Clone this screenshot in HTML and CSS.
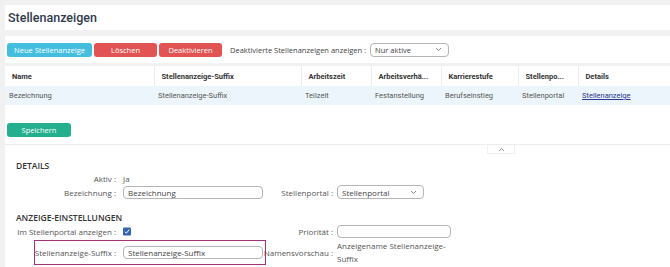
FILE: index.html
```html
<!DOCTYPE html>
<html lang="de">
<head>
    <meta charset="UTF-8">
    <title>Stellenanzeigen</title>
    <link rel="stylesheet" href="styles.css">
</head>
<body>
    <!-- Title -->
    <div class="title-panel">
        <h1>Stellenanzeigen</h1>
    </div>

    <!-- Toolbar -->
    <div class="toolbar">
        <button class="btn btn-info btn-new">Neue Stellenanzeige</button>
        <button class="btn btn-danger btn-delete">Löschen</button>
        <button class="btn btn-danger btn-deactivate">Deaktivieren</button>
        <span class="toolbar-label">Deaktivierte Stellenanzeigen anzeigen :</span>
        <div class="select select-filter">
            <span>Nur aktive</span>
            <svg width="7" height="5" viewBox="0 0 7 5"><path d="M1 1l2.5 2.5L6 1" fill="none" stroke="#777" stroke-width="0.9"/></svg>
        </div>
    </div>

    <div class="content">
        <!-- List -->
        <table class="list">
            <colgroup>
                <col style="width:149px">
                <col style="width:147px">
                <col style="width:70px">
                <col style="width:70px">
                <col style="width:77px">
                <col style="width:60px">
                <col>
            </colgroup>
            <thead>
                <tr>
                    <th>Name</th>
                    <th>Stellenanzeige-Suffix</th>
                    <th>Arbeitszeit</th>
                    <th>Arbeitsverhä...</th>
                    <th>Karrierestufe</th>
                    <th>Stellenpo...</th>
                    <th>Details</th>
                </tr>
            </thead>
            <tbody>
                <tr>
                    <td>Bezeichnung</td>
                    <td>Stellenanzeige-Suffix</td>
                    <td>Teilzeit</td>
                    <td>Festanstellung</td>
                    <td>Berufseinstieg</td>
                    <td>Stellenportal</td>
                    <td><a href="#">Stellenanzeige</a></td>
                </tr>
            </tbody>
        </table>

        <div class="save-bar">
            <button class="btn btn-success btn-save">Speichern</button>
        </div>

        <div class="divider">
            <div class="divider-tab">
                <svg width="7" height="5" viewBox="0 0 7 5"><path d="M1 4l2.5-2.5L6 4" fill="none" stroke="#888" stroke-width="0.9"/></svg>
            </div>
        </div>

        <!-- Detail form -->
        <div class="form">
            <h2 class="section-title">DETAILS</h2>
            <div class="form-row row-small">
                <div class="pair">
                    <label class="label">Aktiv :</label>
                    <div class="field"><span class="value">Ja</span></div>
                </div>
            </div>
            <div class="form-row">
                <div class="pair">
                    <label class="label">Bezeichnung :</label>
                    <div class="field"><div class="input">Bezeichnung</div></div>
                </div>
                <div class="pair pair-right">
                    <label class="label">Stellenportal :</label>
                    <div class="field">
                        <div class="select select-portal">
                            <span>Stellenportal</span>
                            <svg width="7" height="5" viewBox="0 0 7 5"><path d="M1 1l2.5 2.5L6 1" fill="none" stroke="#777" stroke-width="0.9"/></svg>
                        </div>
                    </div>
                </div>
            </div>

            <h2 class="section-title section-second">ANZEIGE-EINSTELLUNGEN</h2>
            <div class="form-row">
                <div class="pair">
                    <label class="label">Im Stellenportal anzeigen :</label>
                    <div class="field">
                        <svg class="checkbox" width="8" height="9" viewBox="0 0 8 9"><rect x="0" y="0.5" width="8" height="8" rx="1.2" fill="#3567b0"/><path d="M2 4.7l1.4 1.5L6.2 2.6" fill="none" stroke="#fff" stroke-width="1"/></svg>
                    </div>
                </div>
                <div class="pair pair-right">
                    <label class="label">Priorität :</label>
                    <div class="field"><div class="input input-prio"></div></div>
                </div>
            </div>
            <div class="form-row row-suffix">
                <div class="pair highlighted">
                    <label class="label">Stellenanzeige-Suffix :</label>
                    <div class="field"><div class="input">Stellenanzeige-Suffix</div></div>
                </div>
                <div class="pair pair-right">
                    <label class="label">Namensvorschau :</label>
                    <div class="field"><span class="value preview">Anzeigename Stellenanzeige-Suffix</span></div>
                </div>
            </div>
        </div>
    </div>
</body>
</html>
```

FILE: styles.css
```css
html {
    height: 100%;
    overflow: hidden;
}
body {
    margin: 0;
    padding: 5px 0 0 5px;
    box-sizing: border-box;
    height: 100%;
    display: flex;
    flex-direction: column;
    background-color: #f1f1f1;
    font-family: "Open Sans", Arial, sans-serif;
    font-size: 8px;
    color: #555;
    overflow: hidden;
}
.title-panel {
    background-color: #fff;
    height: 25px;
    flex-shrink: 0;
    padding-left: 3px;
    display: flex;
    align-items: center;
}
.title-panel h1 {
    margin: 0;
    font-family: Roboto, Arial, sans-serif;
    font-size: 12.5px;
    font-weight: 500;
    color: #2e3a4b;
}
.toolbar {
    background-color: #fff;
    margin-top: 6px;
    height: 27px;
    flex-shrink: 0;
    padding-left: 2px;
    display: flex;
    align-items: center;
}
.btn {
    height: 14px;
    border: none;
    border-radius: 3px;
    color: #fff;
    font-family: "Open Sans", Arial, sans-serif;
    font-size: 7.5px;
    padding: 0;
    cursor: pointer;
}
.btn-info {
    background-color: #43bedf;
}
.btn-danger {
    background-color: #e25353;
}
.btn-success {
    background-color: #24b08f;
}
.btn-new {
    width: 85px;
}
.btn-delete {
    width: 63px;
    margin-left: 2px;
}
.btn-deactivate {
    width: 63px;
    margin-left: 2px;
}
.toolbar-label {
    margin-left: 8px;
    font-size: 7.5px;
    color: #444;
}
.select {
    box-sizing: border-box;
    height: 14px;
    border: 1px solid #b5b5b5;
    border-radius: 4px;
    background-color: #fff;
    display: flex;
    align-items: center;
    justify-content: space-between;
    padding: 0 6px 0 4px;
    color: #444;
}
.select-filter {
    width: 79px;
    margin-left: 4px;
    font-size: 7.5px;
}
.select-portal {
    width: 87px;
}
.content {
    background-color: #fff;
    margin-top: 3px;
    flex: 1;
    min-height: 0;
    overflow: hidden;
}
.list {
    width: 665px;
    border-collapse: collapse;
    table-layout: fixed;
    font-family: Roboto, Arial, sans-serif;
    font-size: 7.5px;
}
.list th {
    height: 20px;
    padding: 0 0 0 7px;
    text-align: left;
    font-weight: 700;
    color: #333;
    border-left: 1px solid #ececec;
    white-space: nowrap;
    overflow: hidden;
}
.list th:first-child {
    border-left: none;
}
.list td {
    height: 19px;
    padding: 0 0 0 4px;
    background-color: #edf5fc;
    color: #555;
    white-space: nowrap;
}
.list a {
    color: #27378f;
}
.save-bar {
    padding: 18px 0 0 2px;
}
.btn-save {
    width: 64px;
}
.divider {
    margin-top: 7px;
    border-top: 1px solid #ececec;
    height: 9px;
    display: flex;
}
.divider-tab {
    margin-left: 482px;
    width: 28px;
    height: 9px;
    box-sizing: border-box;
    border: 1px solid #f0f0f0;
    border-top: none;
    display: flex;
    align-items: center;
    justify-content: center;
}
.form {
    padding-top: 6px;
}
.section-title {
    margin: 0;
    padding-left: 11px;
    font-size: 8.5px;
    font-weight: 600;
    color: #333;
    line-height: 12px;
}
.section-second {
    margin-top: 13px;
}
.form-row {
    display: flex;
    align-items: center;
    min-height: 14px;
}
.row-small {
    min-height: 12px;
    margin-bottom: 1px;
}
.row-suffix {
    margin-top: 1px;
    min-height: 26px;
}
.pair {
    display: flex;
    align-items: center;
}
.pair .label {
    width: 111px;
    text-align: right;
}
.pair .field {
    width: 140px;
    margin-left: 7px;
    display: flex;
    align-items: center;
}
.pair-right .label {
    width: 70px;
}
.pair-right .field {
    margin-left: 4px;
    width: 130px;
}
.highlighted {
    position: relative;
}
.highlighted::after {
    content: "";
    position: absolute;
    left: 29px;
    right: -3px;
    top: -6px;
    bottom: -6px;
    border: 1.5px solid #a2327e;
}
.value {
    color: #555;
}
.preview {
    line-height: 13px;
    width: 110px;
}
.input {
    box-sizing: border-box;
    width: 140px;
    height: 13px;
    border: 1px solid #b5b5b5;
    border-radius: 4px;
    padding: 0 4px;
    line-height: 11px;
    color: #444;
}
.input-prio {
    width: 114px;
}
.checkbox {
    display: block;
}
```
